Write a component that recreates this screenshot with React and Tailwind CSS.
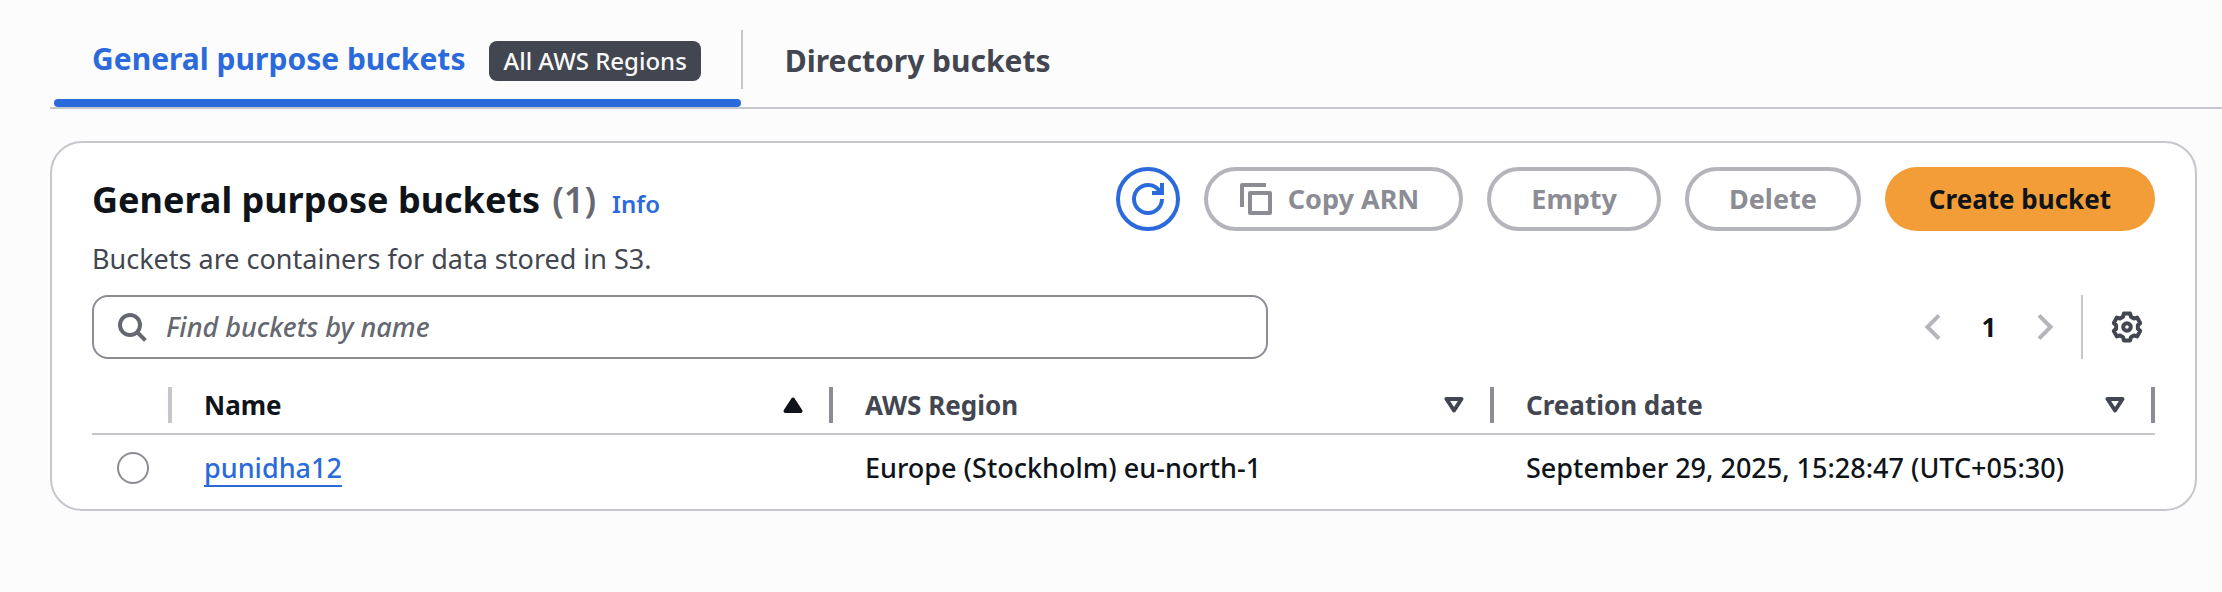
import React from "react";

const gearPath = (() => {
  const points = [];
  for (let lobe = 0; lobe < 6; lobe += 1) {
    const centre = -90 + lobe * 60;
    [[-21, 5.5], [-13, 6.9], [13, 6.9], [21, 5.5]].forEach(([offset, radius]) => {
      const angle = ((centre + offset) * Math.PI) / 180;
      points.push(`${(8 + radius * Math.cos(angle)).toFixed(2)} ${(8 + radius * Math.sin(angle)).toFixed(2)}`);
    });
  }
  return `M${points.join("L")}Z`;
})();

function Icon({ children, className = "" }) {
  return (
    <svg
      aria-hidden="true"
      viewBox="0 0 16 16"
      fill="none"
      stroke="currentColor"
      strokeWidth="2"
      className={`size-8 shrink-0 ${className}`}
    >
      {children}
    </svg>
  );
}

function SortIcon({ ascending }) {
  return (
    <svg
      aria-hidden="true"
      viewBox="0 0 20 16"
      fill={ascending ? "currentColor" : "none"}
      stroke="currentColor"
      strokeWidth="4"
      strokeLinejoin="round"
      className="h-4 w-5 shrink-0"
    >
      <path d={ascending ? "M10 2.5 17.5 14h-15z" : "M2.5 2h15L10 13.5z"} />
    </svg>
  );
}

function OutlineButton({ icon, children }) {
  return (
    <button
      type="button"
      aria-disabled="true"
      className={`flex h-16 items-center gap-4 rounded-full border-4 border-[#b4b4bb] pr-10 text-[27px] font-bold text-[#8c8c94] ${icon ? "pl-8" : "pl-10"}`}
    >
      {icon}
      {children}
    </button>
  );
}

function HeaderCell({ label, ascending }) {
  return (
    <th
      scope="col"
      aria-sort={ascending ? "ascending" : "none"}
      className={`h-[58px] border-b-2 border-[#c6c6cd] p-0 text-left font-bold ${ascending ? "text-[#0f141a]" : "text-[#424650]"}`}
    >
      <div className="flex items-center">
        <button type="button" className="flex grow items-center justify-between pr-[26px] pl-8 text-[26px] leading-9">
          {label}
          <SortIcon ascending={ascending} />
        </button>
        <span className="h-9 w-1 bg-[#8c8c94]" />
      </div>
    </th>
  );
}

export default function App() {
  return (
    <main className="min-h-screen bg-[#fcfcfd] font-['Noto_Sans','Open_Sans',sans-serif] font-medium text-[#0f141a]">
      <div role="tablist" className="ml-[50px] flex border-b-2 border-[#c6c6cd] pl-1 text-[30px] font-bold">
        <button type="button" role="tab" aria-selected="true" className="flex flex-col text-[#2b6adb]">
          <span className="flex h-[99px] items-center gap-6 pt-[18px] pr-10 pl-[38px]">
            General purpose buckets
            <span className="mt-1 flex h-10 items-center rounded-lg bg-[#424650] px-3.5 text-[24px] font-medium text-[#f9f9fa]">
              All AWS Regions
            </span>
          </span>
          <span className="h-2 w-full rounded-full bg-[#2b6adb]" />
        </button>
        <span className="mt-[30px] h-[59px] w-0.5 bg-[#c6c6cd]" />
        <button type="button" role="tab" aria-selected="false" className="flex h-[99px] items-center pt-[22px] pr-10 pl-[42px] text-[#424650]">
          Directory buckets
        </button>
      </div>

      <section className="mt-8 mr-[25px] ml-[50px] rounded-[32px] border-2 border-[#c6c6cd] bg-white px-10 pt-6">
        <header className="flex items-center justify-between gap-6">
          <div className="flex items-baseline gap-4 pt-0.5">
            <h2 className="flex gap-3 text-[36px] leading-[60px] font-bold">
              General purpose buckets <span className="font-semibold text-[#656871]">(1)</span>
            </h2>
            <a href="#info" className="text-[24px] font-semibold text-[#2b6adb]">Info</a>
          </div>
          <div className="flex items-center gap-6">
            <button
              type="button"
              aria-label="Refresh"
              className="flex size-16 items-center justify-center rounded-full border-4 border-[#2b6adb] text-[#2b6adb]"
            >
              <Icon>
                <path d="M15 8a7 7 0 1 1-7-7c2.6 0 4.8 1.4 6 3.5M10 5h5V0" />
              </Icon>
            </button>
            <OutlineButton
              icon={
                <Icon>
                  <path d="M1 12V1h12M5 5h10v10H5z" strokeLinejoin="round" />
                </Icon>
              }
            >
              Copy ARN
            </OutlineButton>
            <OutlineButton>Empty</OutlineButton>
            <OutlineButton>Delete</OutlineButton>
            <button type="button" className="h-16 rounded-full bg-[#f29d38] px-11 text-[26px] font-bold">
              Create bucket
            </button>
          </div>
        </header>
        <p className="mt-2 text-[27px] leading-10 font-normal text-[#424650]">Buckets are containers for data stored in S3.</p>

        <div className="mt-4 flex items-center justify-between">
          <label className="flex h-16 w-[57%] items-center gap-[18px] rounded-2xl border-2 border-[#8c8c94] px-[22px] text-[#656871]">
            <Icon>
              <circle cx="7" cy="7" r="5" />
              <path d="m10.5 10.5 4.2 4.2" />
            </Icon>
            <input
              type="text"
              aria-label="Find buckets by name"
              placeholder="Find buckets by name"
              className="min-w-0 grow text-[27px] italic outline-none placeholder:text-[#656871]"
            />
          </label>
          <div className="flex items-center pr-3">
            <button type="button" aria-label="Previous page" className="text-[#b4b4bb]">
              <Icon>
                <path d="M11 2.2 5.2 8l5.8 5.8" />
              </Icon>
            </button>
            <button type="button" aria-current="page" className="w-20 text-center text-[26px] font-bold">1</button>
            <button type="button" aria-label="Next page" className="text-[#b4b4bb]">
              <Icon>
                <path d="M5 2.2 10.8 8 5 13.8" />
              </Icon>
            </button>
            <span className="mr-7 ml-5 h-16 w-0.5 bg-[#c6c6cd]" />
            <button type="button" aria-label="Preferences" className="text-[#424650]">
              <Icon>
                <path d={gearPath} strokeLinejoin="round" />
                <circle cx="8" cy="8" r="1.9" />
              </Icon>
            </button>
          </div>
        </div>

        <table className="mt-[18px] w-full table-fixed border-separate border-spacing-0">
          <thead>
            <tr>
              <th scope="col" aria-label="Selection" className="w-20 border-b-2 border-[#c6c6cd] p-0">
                <span className="ml-auto block h-9 w-1 bg-[#c6c6cd]" />
              </th>
              <HeaderCell label="Name" ascending />
              <HeaderCell label="AWS Region" />
              <HeaderCell label="Creation date" />
            </tr>
          </thead>
          <tbody className="text-[27px]">
            <tr>
              <td className="h-[74px] p-0 pb-2 pl-[25px]">
                <input
                  type="radio"
                  name="bucket"
                  aria-label="Select punidha12"
                  className="block size-8 appearance-none rounded-full border-2 border-[#8c8c94]"
                />
              </td>
              <td className="p-0 pb-2 pl-8">
                <a href="#punidha12" className="text-[#2b6adb] underline decoration-2 underline-offset-[7px]">punidha12</a>
              </td>
              <td className="p-0 pb-2 pl-8">Europe (Stockholm) eu-north-1</td>
              <td className="p-0 pb-2 pl-8">September 29, 2025, 15:28:47 (UTC+05:30)</td>
            </tr>
          </tbody>
        </table>
      </section>
    </main>
  );
}
